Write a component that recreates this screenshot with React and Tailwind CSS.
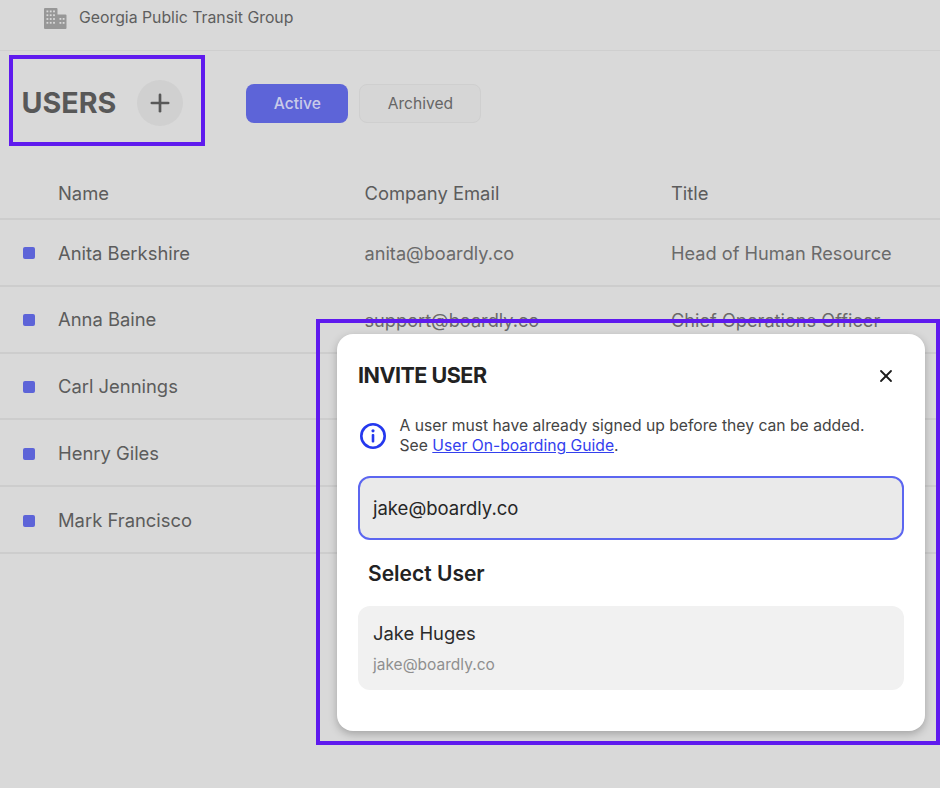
import React from "react";
import { X, Plus } from "lucide-react";

const rows = [
  ["Anita Berkshire", "anita@boardly.co", "Head of Human Resource"],
  ["Anna Baine", "support@boardly.co", "Chief Operations Officer"],
  ["Carl Jennings", "", ""],
  ["Henry Giles", "", ""],
  ["Mark Francisco", "", ""],
];

function Building() {
  return (
    <svg width="23" height="21" viewBox="0 0 23 21" className="shrink-0">
      <path d="M1 0h11.500a1 1 0 0 1 1 1v5.500h8a1 1 0 0 1 1 1v12.500a1 1 0 0 1-1 1h-20.500a1 1 0 0 1-1-1v-19a1 1 0 0 1 1-1z" fill="#979797" />
      <g fill="#d9d9d9">
        {[2.500, 5.800, 9.100].map((x) =>
          [2.500, 6.300, 10.100, 13.900].map((y) => <rect key={x + "-" + y} x={x} y={y} width="1.800" height="1.800" />)
        )}
        {[15.500, 18.700].map((x) =>
          [10, 14].map((y) => <rect key={x + "-" + y} x={x} y={y} width="1.800" height="1.800" />)
        )}
      </g>
    </svg>
  );
}

function Info() {
  return (
    <svg width="28" height="28" viewBox="0 0 28 28" className="shrink-0">
      <circle cx="14" cy="14" r="11.700" fill="none" stroke="#2438ee" strokeWidth="2.600" />
      <circle cx="14" cy="8.800" r="1.600" fill="#2438ee" />
      <rect x="12.700" y="12" width="2.600" height="8.500" rx="1" fill="#2438ee" />
    </svg>
  );
}

export default function App() {
  return (
    <div className="relative h-[788px] w-[940px] overflow-hidden bg-[#d9d9d9] font-['Inter',sans-serif] text-[#5c5c5c]">
      <div className="flex h-[51px] items-start gap-[13px] border-b border-[#cfcfcf] pl-[44px] pt-[8px]">
        <Building />
        <span className="-ml-[1px] text-[15.800px] leading-[20px] text-[#5e5e5e]">Georgia Public Transit Group</span>
      </div>

      <div className="flex h-[105px] items-center pb-[1px] pl-[21.500px]">
        <h1 className="text-[28.700px] font-bold leading-none text-[#585858]">USERS</h1>
        <div className="ml-[21px] flex h-[46px] w-[46px] items-center justify-center rounded-full bg-[#d0d0d0]">
          <Plus size={28} strokeWidth={2.300} color="#585858" />
        </div>
        <div className="ml-[63px] flex h-[39px] w-[102px] items-center justify-center rounded-lg bg-[#5d64d8] pt-px text-[15.600px] font-medium text-[#c9cbe9]">
          Active
        </div>
        <div className="ml-[11px] flex h-[39px] w-[122px] items-center justify-center rounded-lg border border-[#cfcfcf] bg-[#d6d6d6] pt-px text-[15.600px] text-[#666666]">
          Archived
        </div>
      </div>

      <div className="grid h-[64px] grid-cols-[58px_306.500px_306.500px_1fr] items-center border-b-2 border-[#cdcdcd] pt-[13px] text-[18.400px]">
        <span />
        <span>Name</span>
        <span>Company Email</span>
        <span>Title</span>
      </div>

      {rows.map(([name, email, title]) => (
        <div
          key={name}
          className="grid h-[66.800px] grid-cols-[58px_306.500px_306.500px_1fr] items-center border-b-2 border-[#cdcdcd] pt-[2px] text-[18.400px]"
        >
          <span className="ml-[23px] h-3 w-3 rounded-[2px] bg-[#5d64d8]" />
          <span>{name}</span>
          <span className="text-[18.200px] text-[#6a6a6a]">{email}</span>
          <span className="whitespace-nowrap text-[18.200px] text-[#6a6a6a]">{title}</span>
        </div>
      ))}

      <div className="absolute left-[9px] top-[55px] h-[91px] w-[196px] border-4 border-[#5f1aee]" />
      <div className="absolute left-[316px] top-[319px] h-[426px] w-[624px] border-4 border-[#5f1aee]" />

      <div className="absolute left-[337px] top-[334px] h-[397px] w-[588px] rounded-2xl bg-white px-[21px] shadow-[0_3px_8px_rgba(0,0,0,0.25)]">
        <div className="flex h-[83px] items-center justify-between pr-[8px] pt-px">
          <h2 className="text-[21.500px] font-bold leading-none tracking-[-0.5px] text-[#222222]">INVITE USER</h2>
          <X size={20} strokeWidth={2.200} color="#1c1c1c" />
        </div>
        <div className="-mt-px flex items-center gap-[12.500px] pl-px">
          <Info />
          <p className="text-[15.700px] leading-[20px] text-[#444444]">
            A user must have already signed up before they can be added.
            <br />
            See <a className="text-[#3340ee] underline">User On-boarding Guide</a>.
          </p>
        </div>
        <div className="mt-[20px] flex h-[64px] items-center rounded-xl border-2 border-[#5c66f0] bg-[#eaeaea] pl-[13px] pt-px text-[18.500px] text-[#262626]">
          jake@boardly.co
        </div>
        <div className="mt-[20px] pl-[10px] text-[21px] font-semibold leading-[28px] text-[#222222]">Select User</div>
        <div className="mt-[18px] h-[84px] rounded-xl bg-[#f1f1f1] pl-[15px] pt-[15px]">
          <div className="text-[18.400px] leading-[25px] text-[#2b2b2b]">Jake Huges</div>
          <div className="mt-[9px] text-[15.500px] leading-[20px] text-[#8f8f8f]">jake@boardly.co</div>
        </div>
      </div>
    </div>
  );
}
